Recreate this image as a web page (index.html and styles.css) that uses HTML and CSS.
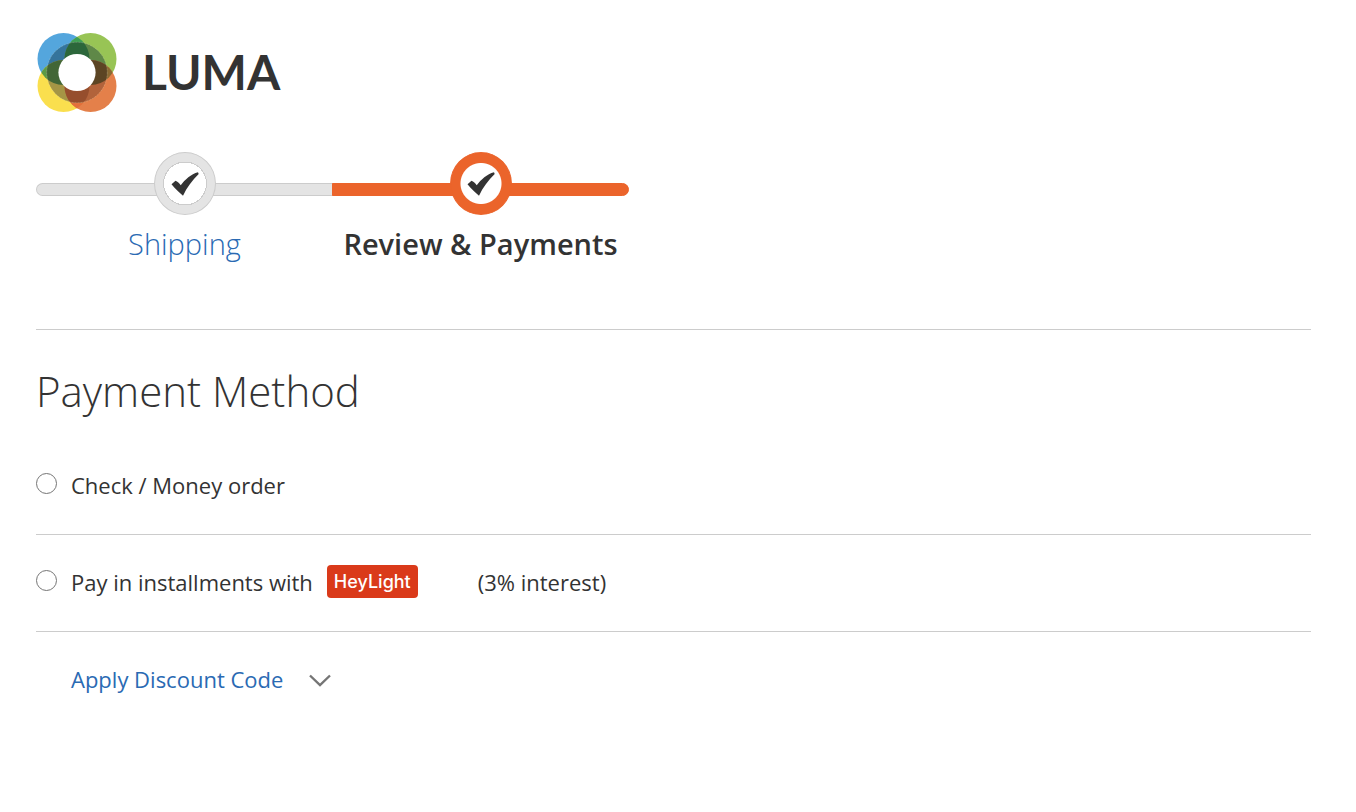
FILE: index.html
```html
<!DOCTYPE html>
<html lang="en">
<head>
<meta charset="utf-8">
<meta name="viewport" content="width=device-width, initial-scale=1">
<title>Checkout</title>
<link rel="stylesheet" href="styles.css">
</head>
<body>
<div class="page">
  <header class="header">
    <a class="logo" href="#" aria-label="Luma">
      <svg class="logo-mark" viewBox="0 0 81 81" aria-hidden="true">
        <defs>
          <clipPath id="tl"><circle cx="27" cy="27" r="26"/></clipPath>
          <clipPath id="tr"><circle cx="54" cy="27" r="26"/></clipPath>
          <clipPath id="bl"><circle cx="27" cy="54" r="26"/></clipPath>
          <clipPath id="br"><circle cx="54" cy="54" r="26"/></clipPath>
          <clipPath id="ring"><circle cx="40.5" cy="40.5" r="30.3"/></clipPath>
        </defs>
        <circle cx="27" cy="27" r="26" fill="#54a6dd"/>
        <circle cx="54" cy="27" r="26" fill="#98c455"/>
        <circle cx="27" cy="54" r="26" fill="#fadf4e"/>
        <circle cx="54" cy="54" r="26" fill="#e4804a"/>
        <g clip-path="url(#tl)"><circle cx="54" cy="27" r="26" fill="#3f9f54"/><circle cx="27" cy="54" r="26" fill="#5c9a45"/></g>
        <g clip-path="url(#br)"><circle cx="54" cy="27" r="26" fill="#8a6a32"/><circle cx="27" cy="54" r="26" fill="#e2703a"/></g>
        <g clip-path="url(#ring)">
          <circle cx="27" cy="27" r="26" fill="#35749c"/>
          <circle cx="54" cy="27" r="26" fill="#5f8848"/>
          <circle cx="27" cy="54" r="26" fill="#a59545"/>
          <circle cx="54" cy="54" r="26" fill="#b2633b"/>
          <g clip-path="url(#tl)"><circle cx="54" cy="27" r="26" fill="#2c673b"/><circle cx="27" cy="54" r="26" fill="#426636"/></g>
          <g clip-path="url(#br)"><circle cx="54" cy="27" r="26" fill="#5c4524"/><circle cx="27" cy="54" r="26" fill="#964e2d"/></g>
        </g>
        <circle cx="40.5" cy="40.5" r="30.3" fill="none" stroke="#d8d8c0" stroke-opacity=".45" stroke-width=".6" stroke-dasharray="2 1"/>
        <circle cx="40.5" cy="40.5" r="18.6" fill="#fff"/>
      </svg>
      <span class="logo-name">LUMA</span>
    </a>
  </header>

  <main>
    <ol class="progress">
      <li class="step step-done">
        <span class="track"><span class="bar"></span><span class="marker">
          <svg class="check" viewBox="0 0 28 24" aria-hidden="true"><path d="M.5 12.200 4.500 8.800c2 .8 3.800 2.400 5.200 4.500C14 7.500 20 2 27 .2l.7 1.700C21.500 8 16 15 12 23.700 8.500 20.500 4 16.500.5 12.200Z" fill="#333"/></svg>
        </span></span>
        <a class="step-label" href="#">Shipping</a>
      </li>
      <li class="step step-active">
        <span class="track"><span class="bar"></span><span class="marker">
          <svg class="check" viewBox="0 0 28 24" aria-hidden="true"><path d="M.5 12.200 4.500 8.800c2 .8 3.800 2.400 5.200 4.500C14 7.500 20 2 27 .2l.7 1.700C21.500 8 16 15 12 23.700 8.500 20.500 4 16.500.5 12.200Z" fill="#333"/></svg>
        </span></span>
        <span class="step-label">Review &amp; Payments</span>
      </li>
    </ol>

    <form class="payment">
      <h1 class="title">Payment Method</h1>
      <div class="method">
        <input class="radio" type="radio" name="method" id="check-order">
        <label class="method-label" for="check-order">Check / Money order</label>
      </div>
      <div class="method">
        <input class="radio" type="radio" name="method" id="heylight">
        <label class="method-label" for="heylight"><span>Pay in installments with</span><span class="brand">HeyLight</span><span class="interest">(3% interest)</span></label>
      </div>
      <button class="discount" type="button">Apply Discount Code
        <svg class="chevron" viewBox="0 0 22 14" aria-hidden="true"><path d="M1 2.500 11 12 21 2.500" fill="none" stroke="#757575" stroke-width="2.400"/></svg>
      </button>
    </form>
  </main>
</div>
</body>
</html>
```
FILE: styles.css
```css
* {
  box-sizing: border-box;
}

body {
  margin: 0;
  background: #fff;
  color: #333;
  font-family: "Open Sans", "Noto Sans", sans-serif;
  font-size: 22px;
  line-height: 32px;
}

a {
  color: #2a6ab3;
  text-decoration: none;
}

.page {
  padding: 32px 45px 32px 36px;
}

.header {
  display: flex;
}

.logo {
  display: flex;
  align-items: center;
  gap: 24px;
  color: #333;
}

.logo-mark {
  width: 82px;
  height: 81px;
}

.logo-name {
  font-family: Lato, sans-serif;
  font-size: 48px;
  font-weight: 700;
  line-height: 78px;
  padding-bottom: 2px;
}

.progress {
  display: flex;
  margin: 39px 0 0;
  padding: 0;
  list-style: none;
}

.step {
  width: 297px;
  text-align: center;
}

.step-active {
  margin-left: -1px;
}

.track {
  display: grid;
  justify-items: center;
}

.bar,
.marker {
  grid-area: 1 / 1;
}

.bar {
  width: 100%;
  height: 13px;
  margin-top: 31px;
  border: 1px solid #ccc;
  background: #e4e4e4;
}

.step-done .bar {
  border-right: 0;
  border-radius: 7px 0 0 7px;
}

.step-active .bar {
  border-color: #eb642b;
  border-radius: 0 7px 7px 0;
  background: #eb642b;
}

.marker {
  display: grid;
  place-items: center;
  width: 62px;
  height: 63px;
  border: 1px solid #ccc;
  border-radius: 50%;
  background: radial-gradient(circle, #fff 21px, #ccc 21px, #ccc 22px, #e4e4e4 22px);
}

.step-active .marker {
  border-color: #eb642b;
  background: radial-gradient(circle, #fff 20px, #eb642b 21px);
}

.check {
  width: 28px;
  height: 24px;
}

.step-label {
  display: block;
  margin-top: 9px;
  font-size: 29px;
  font-weight: 300;
  line-height: 40px;
}

.step-active .step-label {
  font-weight: 600;
}

.payment {
  margin-top: 65px;
  border-top: 1px solid #ccc;
}

.title {
  margin: 31px 0 35px;
  font-size: 42px;
  font-weight: 300;
  line-height: 60px;
}

.method {
  display: flex;
  align-items: center;
  gap: 14px;
  height: 97px;
  padding-bottom: 2px;
  border-bottom: 1px solid #ccc;
}

.method:first-of-type {
  height: 79px;
  padding-bottom: 20px;
}

.radio {
  width: 21px;
  height: 21px;
  margin: 0 0 4px;
  border: 1px solid #757575;
  border-radius: 50%;
  background: #fff;
  appearance: none;
}

.radio:checked {
  background: radial-gradient(circle, #2a6ab3 5px, #fff 6px);
}

.method-label {
  display: flex;
  align-items: center;
}

.brand {
  margin: 0 60px 2px 14px;
  padding: 0 7px;
  border-radius: 4px;
  background: #da3a1a;
  color: #fff;
  font-family: Inter, sans-serif;
  font-size: 18px;
  font-weight: 500;
  line-height: 33px;
}

.discount {
  display: flex;
  align-items: center;
  gap: 26px;
  margin: 31px 0 0 35px;
  padding: 0;
  border: 0;
  background: none;
  color: #2a6ab3;
  font: inherit;
}

.chevron {
  width: 22px;
  height: 14px;
  margin-top: 2px;
}
```
